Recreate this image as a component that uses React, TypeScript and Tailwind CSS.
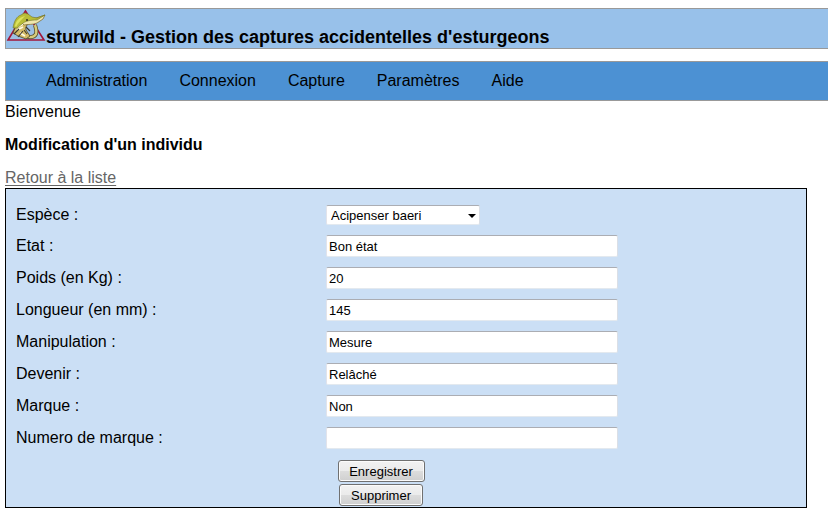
const menu = ['Administration', 'Connexion', 'Capture', 'Paramètres', 'Aide'];

const fields = [
  { id: 'etat', label: 'Etat :', value: 'Bon état' },
  { id: 'poids', label: 'Poids (en Kg) :', value: '20' },
  { id: 'longueur', label: 'Longueur (en mm) :', value: '145' },
  { id: 'manipulation', label: 'Manipulation :', value: 'Mesure' },
  { id: 'devenir', label: 'Devenir :', value: 'Relâché' },
  { id: 'marque', label: 'Marque :', value: 'Non' },
  { id: 'numero', label: 'Numero de marque :', value: '' },
];

const fieldBorder =
  'rounded-xs border border-t-[#abadb3] border-r-[#dbdfe6] border-b-[#e3e9ef] border-l-[#e2e3ea] bg-white text-[13px]';

const buttonStyle =
  'h-[22px] rounded-[3px] border border-[#707070] bg-[linear-gradient(#f2f2f2_0%,#ebebeb_50%,#dddddd_50%,#cfcfcf_100%)] pt-0.5 text-[13px] leading-4 shadow-[inset_0_0_0_1px_#fbfbfb]';

function Logo() {
  return (
    <svg viewBox="0 0 40 33" className="h-[33px] w-10 shrink-0" aria-hidden="true">
      <path d="M19.5 2 L2 31 H38 Z" fill="#9dbfe3" stroke="#a3163a" strokeWidth="1.6" />
      {/* tail curling up on the right */}
      <path
        d="M29 16 C30 19 31 22 30 25 C28 29 22 29 17 26"
        fill="none"
        stroke="#5b532c"
        strokeWidth="4"
      />
      <path
        d="M29 16 C30 19 31 22 30 25 C28 29 22 29 17 26"
        fill="none"
        stroke="#d8cc7c"
        strokeWidth="2.4"
      />
      {/* belly and gills */}
      <path
        d="M9 19 L14 13 L22 14 C21 17 19 18 20 21 L24 27 L20 30 L12 27 L7 24 Z"
        fill="#d5bd68"
        stroke="#46402a"
        strokeWidth="0.8"
      />
      <path d="M12 18 L17 15 M11 21 L17 18 M14 24 L19 27" stroke="#fffbe4" strokeWidth="1.8" />
      <path d="M8 25 L13 20 M12 28 L17 22 M18 21 L21 25 M20 18 L24 22" stroke="#3e382b" strokeWidth="1.1" />
      {/* head and snout */}
      <path
        d="M15 13 C20 8 26 10 30 9 L39 6 L37 10 L31 14 C27 16 22 15 18 16 Z"
        fill="#efe6ae"
        stroke="#77662c"
        strokeWidth="0.7"
      />
      <path
        d="M7 19 C8 12 11 7 15 6 L18 4 L22 5 L26 8 L31 9 L39 6 L31 11 C24 11 19 12 16 15 L11 19 Z"
        fill="#b8bd38"
        stroke="#71752a"
        strokeWidth="0.6"
      />
      <path d="M9 17 C10 11 14 8 19 7 C16 10 12 14 10 18 Z" fill="#dce25c" />
      <circle cx="21" cy="11" r="1" fill="#332e20" />
    </svg>
  );
}

export default function App() {
  return (
    <div className="pt-2 pl-[5px] font-['Liberation_Sans',Arial,sans-serif] text-base leading-[18px] text-black">
      <header className="flex h-[41px] items-start border border-r-0 border-[#999999] bg-[#98c1ea]">
        <Logo />
        <h1 className="pt-[18px] text-lg leading-5 font-bold whitespace-nowrap">
          sturwild - Gestion des captures accidentelles d'esturgeons
        </h1>
      </header>

      <nav className="mt-3 border border-r-0 border-[#999999] bg-[#4c91d3]">
        <ul className="flex h-[38px] items-center gap-8 pl-10">
          {menu.map((item) => (
            <li key={item}>
              <a href="#">{item}</a>
            </li>
          ))}
        </ul>
      </nav>

      <main className="pt-0.5">
        <p>Bienvenue</p>
        <h2 className="mt-[15px] font-bold">Modification d'un individu</h2>
        <a href="#" className="mt-[15px] inline-block align-top text-[#666666] underline underline-offset-2">
          Retour à la liste
        </a>

        <form
          className="mt-px mr-[21px] border border-black bg-[#cbdff5] px-2.5 pt-[11px] pb-px"
          onSubmit={(e) => e.preventDefault()}
        >
          <div className="flex h-[30px] items-center">
            <label htmlFor="espece" className="w-[310px] shrink-0">
              Espèce :
            </label>
            <div className="relative w-[154px]">
              <select
                id="espece"
                defaultValue="baeri"
                className={`block h-5 w-full appearance-none pt-px pl-1 leading-4 ${fieldBorder}`}
              >
                <option value="baeri">Acipenser baeri</option>
                <option value="sturio">Acipenser sturio</option>
              </select>
              <svg
                viewBox="0 0 8 4"
                className="pointer-events-none absolute top-[9px] right-1 h-1 w-2"
                aria-hidden="true"
              >
                <path d="M0 0 H8 L4 4 Z" fill="#000" />
              </svg>
            </div>
          </div>

          {fields.map((field) => (
            <div key={field.id} className="flex h-8 items-center">
              <label htmlFor={field.id} className="w-[310px] shrink-0">
                {field.label}
              </label>
              <input
                id={field.id}
                type="text"
                defaultValue={field.value}
                className={`h-[22px] w-[292px] px-0.5 ${fieldBorder}`}
              />
            </div>
          ))}

          <div className="ml-[310px] flex w-[110px] flex-col items-center gap-0.5 pt-1.5">
            <button type="submit" className={`w-[87px] ${buttonStyle}`}>
              Enregistrer
            </button>
            <button type="button" className={`w-[84px] ${buttonStyle}`}>
              Supprimer
            </button>
          </div>
        </form>
      </main>
    </div>
  );
}
